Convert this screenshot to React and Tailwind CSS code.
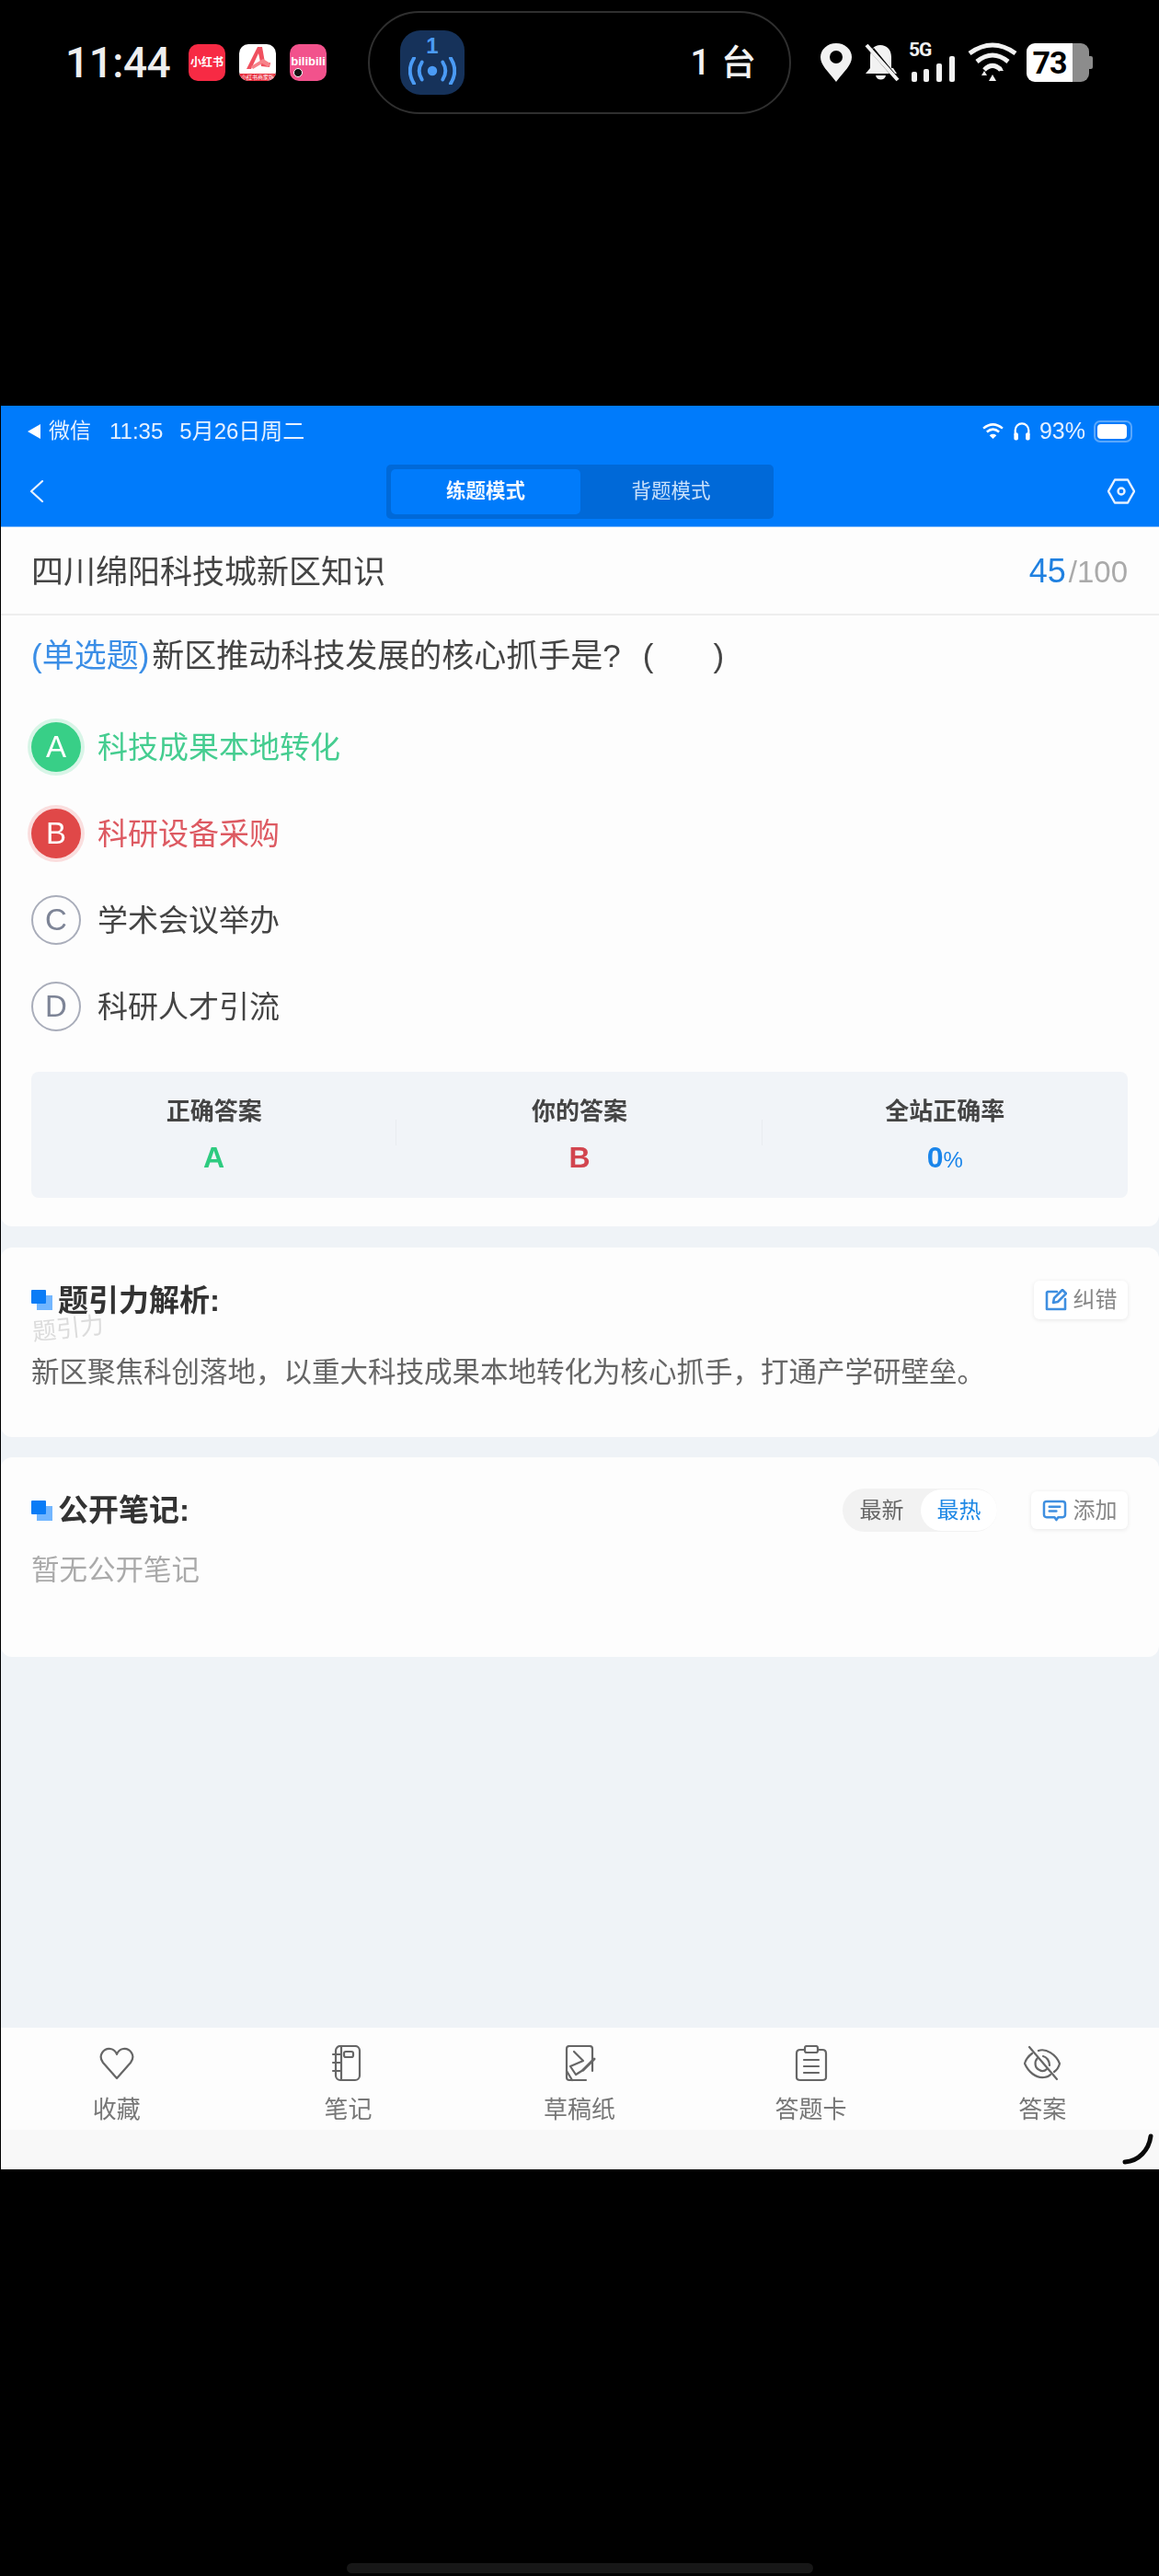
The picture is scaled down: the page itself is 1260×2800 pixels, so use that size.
import React from "react";

const Stack = () => (
  <svg viewBox="0 0 23 22" className="w-[23px] h-[22px] shrink-0">
    <rect x="6" y="6" width="17" height="16" fill="#72b6ff" />
    <rect x="0" y="0" width="16" height="15" rx="1" fill="#0a7cf6" />
  </svg>
);

const Option = ({ letter, text, state }) => {
  const circle =
    state === "ok"
      ? "bg-[#38cf87] text-white shadow-[0_0_0_4px_#d8f5e7]"
      : state === "bad"
      ? "bg-[#e04848] text-white shadow-[0_0_0_4px_#fadede]"
      : "border-2 border-[#a9adba] text-[#7d8496]";
  const label = state === "ok" ? "text-[#45cd90]" : state === "bad" ? "text-[#dd5a62]" : "text-[#444444]";
  return (
    <div className="flex items-center h-[54px]">
      <div className={`w-[54px] h-[54px] rounded-full flex items-center justify-center text-[33px] ${circle}`}>{letter}</div>
      <div className={`ml-[18px] text-[33px] leading-none ${label}`}>{text}</div>
    </div>
  );
};

const Stat = ({ label, children, divider }) => (
  <div className="relative flex-1 flex flex-col items-center">
    <div className="text-[26px] leading-[30px] font-bold text-[#444444]">{label}</div>
    <div className="mt-[17px] h-[36px] flex items-baseline font-bold leading-[36px]">{children}</div>
    {divider && <div className="absolute right-0 top-[24px] h-[28px] w-px bg-[#e9ecf0]" />}
  </div>
);

const Tab = ({ label, children }) => (
  <div className="flex-1 flex flex-col items-center">
    <svg viewBox="0 0 40 40" className="w-[40px] h-[40px]" fill="none" stroke="#666666" strokeWidth="2.2" strokeLinecap="round" strokeLinejoin="round">
      {children}
    </svg>
    <div className="mt-[15px] text-[26px] leading-[30px] text-[#777777]">{label}</div>
  </div>
);

export default function App() {
  return (
    <div className="w-[1260px] h-[2800px] bg-black flex flex-col font-['Liberation_Sans','Noto_Sans_CJK_SC',sans-serif]">
      {/* phone status bar */}
      <div className="h-[441px] shrink-0 pt-[12px]">
        <div className="h-[112px] flex items-center relative">
          <div className="ml-[71px] w-[134px] text-[46px] leading-none font-medium text-[#eeeeee] font-['Roboto',sans-serif] tracking-[-0.5px]">11:44</div>
          <div className="w-[40px] h-[40px] rounded-[10px] bg-[#f72a44] flex items-center justify-center text-white text-[12px] font-bold leading-none whitespace-nowrap">小红书</div>
          <div className="ml-[15px] w-[40px] h-[40px] rounded-[10px] bg-white overflow-hidden flex flex-col">
            <svg viewBox="0 0 40 32" className="w-[40px] h-[32px]">
              <path d="M8 27 L20 3 L25 3 L28 20 L34 20 L33 25 L24 24 L21 10 L13 27 Z" fill="#f0505f" />
              <path d="M13 24 L26 16 L34 21 L32 25 L25 21 L15 27 Z" fill="#f7838a" />
            </svg>
            <div className="h-[8px] bg-[#e8303f] text-white text-[6px] leading-[8px] text-center whitespace-nowrap overflow-hidden">小红书商家版</div>
          </div>
          <div className="ml-[15px] w-[40px] h-[40px] rounded-[10px] bg-[#f2528c] relative flex items-center justify-center text-white text-[13px] font-bold leading-none pb-[3px]">
            bilibili
            <div className="absolute left-[4px] bottom-[4px] w-[10px] h-[10px] rounded-full bg-[#111111] border border-white" />
          </div>
          <div className="ml-[45px] w-[460px] h-[112px] rounded-[56px] border-2 border-[#2f2f2f] flex items-center pl-[33px] pr-[36px] justify-between">
            <div className="w-[70px] h-[70px] rounded-[22px] bg-[#16325a] flex flex-col items-center">
              <div className="text-[24px] leading-[24px] mt-[5px] font-bold text-[#4b9bf5]">1</div>
              <svg viewBox="0 0 60 34" className="w-[52px] h-[30px]" fill="none" stroke="#4b9bf5" strokeWidth="4.5" strokeLinecap="round">
                <circle cx="30" cy="17" r="6" fill="#4b9bf5" stroke="none" />
                <path d="M17 6 Q10 17 17 28" />
                <path d="M43 6 Q50 17 43 28" />
                <path d="M7 1 Q-3 17 7 33" />
                <path d="M53 1 Q63 17 53 33" />
              </svg>
            </div>
            <div className="text-[38px] leading-none text-[#f2f2f2] font-medium flex items-center gap-[12px]"><span className="font-['Roboto',sans-serif]">1</span><span>台</span></div>
          </div>
          <div className="ml-[32px] flex items-center">
            <svg viewBox="0 0 34 42" className="w-[34px] h-[42px]">
              <path fillRule="evenodd" d="M17 42 C8 30 0 24 0 15 A17 15 0 0 1 34 15 C34 24 26 30 17 42 Z M17 8 A7 7 0 1 0 17 22 A7 7 0 0 0 17 8 Z" fill="#f2f2f2" />
            </svg>
            <svg viewBox="0 0 40 42" className="ml-[12px] w-[40px] h-[42px]">
              <path d="M19 2 C12 2 8 7 8 15 L8 27 L3 33 L29 33 L8 9 L12 5 L35 33 L37 33 L33 27 L31 27 L31 15 C31 7 26 2 19 2 Z" fill="#f2f2f2" />
              <path d="M14 35 L25 35 C24 41 15 41 14 35 Z" fill="#f2f2f2" />
              <path d="M4 2 L38 40" stroke="#f2f2f2" strokeWidth="4" />
            </svg>
            <div className="ml-[10px] w-[51px] h-[42px] relative">
              <div className="absolute left-0 top-[-3px] text-[21px] leading-none font-bold text-[#f2f2f2] font-['Roboto',sans-serif] tracking-[-1px]">5G</div>
              <svg viewBox="0 0 51 42" className="w-[51px] h-[42px]">
                <rect x="3" y="31" width="6" height="11" rx="2" fill="#f2f2f2" />
                <rect x="16" y="28" width="6" height="14" rx="2" fill="#f2f2f2" />
                <rect x="30" y="22" width="6" height="20" rx="2" fill="#f2f2f2" />
                <rect x="44" y="14" width="6" height="28" rx="2" fill="#f2f2f2" />
              </svg>
            </div>
            <svg viewBox="0 0 56 44" className="ml-[12px] w-[56px] h-[44px]" fill="none" stroke="#f2f2f2" strokeWidth="5">
              <path d="M3 12 Q28 -6 53 12" />
              <path d="M11 21 Q28 7 45 21" />
              <path d="M19 30 Q28 21 37 30" />
              <path d="M16 36 L22 36 L19 31 Z M34 31 L40 31 L37 26 Z" fill="#f2f2f2" stroke="none" />
              <path d="M24 42 L32 42 L28 35 Z" fill="#f2f2f2" stroke="none" />
            </svg>
            <div className="ml-[9px] w-[72px] h-[42px] flex">
              <div className="w-[50px] h-[42px] rounded-l-[9px] bg-white text-black text-[34px] leading-[42px] font-bold text-center font-['Roboto',sans-serif] tracking-[-1px]">73</div>
              <div className="w-[18px] h-[42px] rounded-r-[9px] bg-[#8c8c8c]" />
              <div className="w-[4px] h-[14px] mt-[14px] bg-[#8c8c8c] rounded-r-[2px]" />
            </div>
          </div>
        </div>
      </div>

      {/* app screen */}
      <div className="h-[1917px] shrink-0 ml-px bg-[#eff3f7] flex flex-col blur-[0.4px]">
        <div className="h-[132px] shrink-0 bg-[#007bfb] border-b border-[#6fb4fb] flex flex-col">
          <div className="h-[55px] flex items-center pl-[29px] pr-[29px] text-[23px] text-[#e6f1ff] leading-none">
            <svg viewBox="0 0 14 16" className="w-[14px] h-[16px]"><path d="M14 0 L14 16 L0 8 Z" fill="#ffffff" /></svg>
            <span className="ml-[9px]">微信</span>
            <span className="ml-[20px] text-[24px]">11:35</span>
            <span className="ml-[18px] text-[24px]">5月26日周二</span>
            <span className="flex-1" />
            <svg viewBox="0 0 26 20" className="w-[25px] h-[19px]" fill="none" stroke="#ffffff" strokeWidth="2.6">
              <path d="M2 7 Q13 -2 24 7" />
              <path d="M6 11 Q13 5 20 11" />
              <path d="M13 19 L9 15 Q13 12 17 15 Z" fill="#ffffff" stroke="none" />
            </svg>
            <svg viewBox="0 0 22 24" className="ml-[9px] w-[20px] h-[23px]" fill="none" stroke="#ffffff" strokeWidth="2.4">
              <path d="M3 16 L3 11 A8 8 0 0 1 19 11 L19 16" />
              <rect x="1.5" y="14" width="5" height="9" rx="2" fill="#ffffff" stroke="none" />
              <rect x="15.5" y="14" width="5" height="9" rx="2" fill="#ffffff" stroke="none" />
            </svg>
            <span className="ml-[9px] text-[25px]">93%</span>
            <div className="ml-[9px] w-[42px] h-[24px] rounded-[7px] border-2 border-[#5aa7fb] p-[2px]">
              <div className="h-full w-[32px] rounded-[4px] bg-white" />
            </div>
          </div>
          <div className="relative flex items-center h-[76px]">
            <svg viewBox="0 0 16 24" className="ml-[31px] w-[16px] h-[24px]" fill="none" stroke="#e6f1ff" strokeWidth="2.2" strokeLinecap="round" strokeLinejoin="round">
              <path d="M14 1 L2 12 L14 23" />
            </svg>
            <div className="ml-[372px] w-[421px] h-[59px] rounded-[5px] bg-[#0069d8] p-[5px] flex">
              <div className="w-[206px] rounded-[5px] bg-[#007bfb] flex items-center justify-center text-[21.5px] font-bold text-[#f2f8ff]">练题模式</div>
              <div className="flex-1 flex items-center justify-center text-[21.5px] text-[#c9e1fb] pr-[8px]">背题模式</div>
            </div>
            <svg viewBox="0 0 30 30" className="ml-[363px] w-[30px] h-[30px]" fill="none" stroke="#e6f1ff" strokeWidth="2.4" strokeLinejoin="round">
              <path d="M8 2.5 L22 2.5 L29 15 L22 27.5 L8 27.5 L1 15 Z" />
              <circle cx="15" cy="15" r="3.5" />
            </svg>
          </div>
        </div>

        {/* question card */}
        <div className="h-[760px] shrink-0 bg-[#fdfdfd] rounded-b-[12px] flex flex-col">
          <div className="h-[96px] shrink-0 border-b-2 border-[#eeeeee] flex items-center justify-between pl-[33px] pr-[34px] pt-[2px]">
            <div className="text-[35px] leading-none text-[#444444]">四川绵阳科技城新区知识</div>
            <div className="flex items-baseline leading-none">
              <span className="text-[36px] text-[#1f80e0]">45</span>
              <span className="ml-[3px] text-[33px] text-[#aaaaaa]">/100</span>
            </div>
          </div>
          <div className="mt-[26px] pl-[33px] text-[35px] leading-[36px] text-[#444444] whitespace-nowrap">
            <span className="text-[#3b8ee6]">(单选题)</span>
            <span className="ml-[3px]">新区推动科技发展的核心抓手是?</span>
            <span className="ml-[24px]">(</span>
            <span className="ml-[65px]">)</span>
          </div>
          <div className="mt-[54px] pl-[33px] flex flex-col gap-[40px]">
            <Option letter="A" text="科技成果本地转化" state="ok" />
            <Option letter="B" text="科研设备采购" state="bad" />
            <Option letter="C" text="学术会议举办" />
            <Option letter="D" text="科研人才引流" />
          </div>
          <div className="mt-[44px] ml-[33px] mr-[34px] h-[137px] rounded-[8px] bg-[#f1f4f8] flex pt-[28px]">
            <Stat label="正确答案" divider><span className="text-[32px] text-[#2ecb80]">A</span></Stat>
            <Stat label="你的答案" divider><span className="text-[32px] text-[#d2454f]">B</span></Stat>
            <Stat label="全站正确率"><span className="text-[32px] text-[#1a85ea]">0</span><span className="text-[24px] text-[#1a85ea] font-normal">%</span></Stat>
          </div>
        </div>

        {/* analysis card */}
        <div className="mt-[23px] h-[206px] shrink-0 bg-[#fdfdfd] rounded-[12px] relative pl-[33px] pt-[35px]">
          <div className="flex items-center h-[44px]">
            <Stack />
            <div className="ml-[6px] text-[33px] leading-none font-bold text-[#333333]">题引力解析:</div>
            <div className="ml-auto mr-[34px] w-[102px] h-[42px] rounded-[6px] bg-white shadow-[0_1px_5px_rgba(0,0,0,0.09)] flex items-center justify-center">
              <svg viewBox="0 0 24 24" className="w-[24px] h-[24px]" fill="none" stroke="#3f8fe0" strokeWidth="2.6" strokeLinecap="round" strokeLinejoin="round">
                <path d="M13 3 L3 3 L2 4 L2 22 L22 22 L22 11" />
                <path d="M9 15 L10 10 L19 1 L23 5 L14 14 Z" />
              </svg>
              <span className="ml-[7px] text-[24px] leading-none text-[#888888]">纠错</span>
            </div>
          </div>
          <div className="absolute left-[34px] top-[75px] text-[26px] leading-none text-[#dcdcdc] -rotate-6">题引力</div>
          <div className="mt-[36px] text-[30.5px] leading-[40px] text-[#666666] whitespace-nowrap">新区聚焦科创落地，以重大科技成果本地转化为核心抓手，打通产学研壁垒。</div>
        </div>

        {/* notes card */}
        <div className="mt-[22px] h-[217px] shrink-0 bg-[#fdfdfd] rounded-[12px] pl-[33px] pt-[34px]">
          <div className="flex items-center h-[47px]">
            <Stack />
            <div className="ml-[6px] text-[33px] leading-none font-bold text-[#333333]">公开笔记:</div>
            <div className="ml-auto w-[168px] h-[47px] rounded-full bg-[#f2f2f2] flex items-center text-[24px]">
              <div className="w-[85px] text-center text-[#666666]">最新</div>
              <div className="w-[83px] h-[45px] rounded-full bg-white flex items-center justify-center text-[#1e88e5]">最热</div>
            </div>
            <div className="ml-[37px] mr-[34px] w-[105px] h-[41px] rounded-[6px] bg-white shadow-[0_1px_5px_rgba(0,0,0,0.09)] flex items-center justify-center">
              <svg viewBox="0 0 28 25" className="w-[27px] h-[24px]" fill="none" stroke="#3f8fe0" strokeWidth="2.6" strokeLinecap="round" strokeLinejoin="round">
                <path d="M5 2 L23 2 Q26 2 26 5 L26 17 Q26 20 23 20 L18 20 L16 23 L14 20 L5 20 Q2 20 2 17 L2 5 Q2 2 5 2 Z" />
                <path d="M8 8 L20 8 M8 13 L16 13" />
              </svg>
              <span className="ml-[7px] text-[24px] leading-none text-[#888888]">添加</span>
            </div>
          </div>
          <div className="mt-[21px] text-[30.5px] leading-[40px] text-[#aaaaaa]">暂无公开笔记</div>
        </div>

        <div className="flex-1" />

        {/* tab bar */}
        <div className="h-[111px] shrink-0 bg-[#fdfdfd] flex pt-[19px] pr-px">
          <Tab label="收藏">
            <path d="M20 36 L5 19 C-1 11 6 3 13 4 C16 4.5 19 7 20 10 C21 7 24 4.5 27 4 C34 3 41 11 35 19 Z" />
          </Tab>
          <Tab label="笔记">
            <rect x="7" y="1" width="26" height="37" rx="5" />
            <rect x="16" y="7" width="10" height="6" rx="2" />
            <path d="M13 1 L13 38 M4 10 L13 10 M4 19 L13 19 M4 28 L13 28" />
          </Tab>
          <Tab label="草稿纸">
            <path d="M27 38 L9 38 Q6 38 6 35 L6 4 Q6 1 9 1 L31 1 Q34 1 34 4 L34 28" />
            <path d="M14 7 L24 17 L10 23 L16 32 L24 27" />
            <path d="M24 27 L36 15" strokeWidth="3" />
            <path d="M6 28 L12 38" />
          </Tab>
          <Tab label="答题卡">
            <path d="M13 5 L8 5 Q4 5 4 9 L4 35 Q4 38 8 38 L32 38 Q36 38 36 35 L36 9 Q36 5 32 5 L27 5" />
            <rect x="13" y="1" width="14" height="7" rx="2" />
            <path d="M12 16 L28 16 M12 23 L28 23 M12 30 L28 30" />
          </Tab>
          <Tab label="答案">
            <path d="M6 2 L36 37" />
            <path d="M9 9 C5 12 2 16 1 20 C5 29 13 36 22 35 C25 35 27 34 29 32 M16 6 C24 3 35 10 39 20 C38 24 36 27 33 29" />
            <path d="M15 14 C11 18 12 25 17 27 C20 29 23 28 25 26 M21 12 C25 13 28 17 28 22" />
          </Tab>
        </div>

        {/* safe area */}
        <div className="h-[43px] shrink-0 bg-[#f8f8f8] relative">
          <svg viewBox="0 0 34 34" className="absolute right-[6px] top-[4px] w-[34px] h-[34px]" fill="none" stroke="#0a0a0a" strokeWidth="5" strokeLinecap="round">
            <path d="M31 3 C29 18 18 30 3 31" />
          </svg>
        </div>
      </div>

      {/* system bottom */}
      <div className="flex-1 flex items-end justify-center pb-[3px]">
        <div className="w-[507px] h-[11px] rounded-full bg-[#171717]" />
      </div>
    </div>
  );
}
